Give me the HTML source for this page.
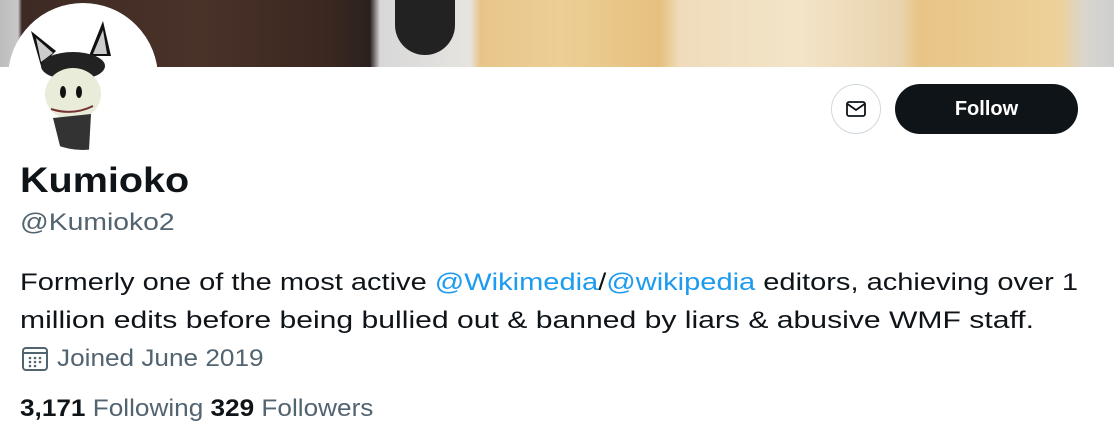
<!DOCTYPE html>
<html><head><style>
body{margin:0;width:1114px;height:446px;background:#fff;font-family:"Liberation Sans",Arial,sans-serif;position:relative;overflow:hidden;color:#0f1419}
.banner{position:absolute;left:0;top:0;width:1114px;height:67px;background:linear-gradient(90deg,#bdbdbd 0,#c8c8c8 18px,#3d2a24 22px,#4a3229 200px,#3a2720 330px,#2a221f 370px,#d8d8d8 380px,#e6e4e0 470px,#e8c48a 480px,#eccf96 560px,#e6c07e 660px,#f0dcbc 680px,#f3e4c8 800px,#e9d3ad 900px,#e8c486 920px,#edd19a 1060px,#d9d6cf 1085px,#cfcfcf 1114px)}
.avatar{position:absolute;left:8px;top:3px;width:144px;height:144px;border-radius:50%;background:#fff;border:3px solid #fff;overflow:hidden}
.t{position:absolute;white-space:nowrap;transform-origin:0 0}
a{color:#1d9bf0}
</style></head><body>
<div class="banner"></div>
<div style="position:absolute;left:395px;top:0;width:60px;height:55px;background:#222;border-radius:0 0 30px 30px"></div>
<div class="avatar"><svg width="144" height="144" viewBox="0 0 144 144">
<rect width="144" height="144" fill="#fff"/>
<path d="M30 60 L20 25 L45 45Z" fill="#111"/><path d="M30 56 L25 32 L42 47Z" fill="#ccc"/>
<path d="M78 50 L92 15 L100 50Z" fill="#111"/><path d="M82 48 L92 24 L96 48Z" fill="#ccc"/>
<ellipse cx="62" cy="60" rx="32" ry="14" fill="#222"/>
<ellipse cx="62" cy="88" rx="28" ry="26" fill="#e8ecd8"/>
<ellipse cx="52" cy="86" rx="3" ry="6" fill="#111"/><ellipse cx="68" cy="86" rx="3" ry="6" fill="#111"/>
<path d="M40 103 Q62 110 82 100" stroke="#733" stroke-width="2" fill="none"/>
<path d="M42 112 L80 108 L78 144 L50 144Z" fill="#333"/>
</svg></div>
<div style="position:absolute;left:831px;top:84px;width:48px;height:48px;border:1px solid #cfd9de;border-radius:50%"></div>
<svg style="position:absolute;left:845px;top:98px" width="22" height="22" viewBox="0 0 22 22"><rect x="2" y="4" width="18" height="14" rx="2" fill="none" stroke="#0f1419" stroke-width="1.8"/><path d="M2.5 6 L11 12 L19.5 6" fill="none" stroke="#0f1419" stroke-width="1.8"/></svg>
<div style="position:absolute;left:895px;top:84px;width:183px;height:50px;background:#0f1419;border-radius:25px;color:#fff;font-weight:bold;font-size:20px;line-height:50px;text-align:center">Follow</div>
<div class="t" style="left:20px;top:161px;font-size:35px;font-weight:bold;transform:scaleX(1.13)">Kumioko</div>
<div class="t" style="left:20px;top:209px;font-size:24px;color:#536471;transform:scaleX(1.18)">@Kumioko2</div>
<div class="t" style="left:20px;top:264px;font-size:24px;line-height:38px;transform:scaleX(1.21)">Formerly one of the most active <a>@Wikimedia</a>/<a>@wikipedia</a> editors, achieving over 1</div>
<div class="t" style="left:20px;top:302px;font-size:24px;line-height:38px;transform:scaleX(1.255)">million edits before being bullied out &amp; banned by liars &amp; abusive WMF staff.</div>
<svg style="position:absolute;left:22px;top:347px" width="26" height="24" viewBox="0 0 26 24"><rect x="1" y="1" width="24" height="22" rx="3" fill="none" stroke="#536471" stroke-width="2"/><line x1="1" y1="6" x2="25" y2="6" stroke="#536471" stroke-width="2"/><g fill="#536471"><circle cx="8" cy="11" r="1.3"/><circle cx="13" cy="11" r="1.3"/><circle cx="18" cy="11" r="1.3"/><circle cx="8" cy="15" r="1.3"/><circle cx="13" cy="15" r="1.3"/><circle cx="18" cy="15" r="1.3"/><circle cx="8" cy="19" r="1.3"/><circle cx="13" cy="19" r="1.3"/></g></svg>
<div class="t" style="left:57px;top:345px;font-size:24px;color:#536471;transform:scaleX(1.09)">Joined June 2019</div>
<div class="t" style="left:20px;top:395px;font-size:24px;color:#536471;transform:scaleX(1.09)"><b style="color:#0f1419">3,171</b> Following <b style="color:#0f1419">329</b> Followers</div>
</body></html>
